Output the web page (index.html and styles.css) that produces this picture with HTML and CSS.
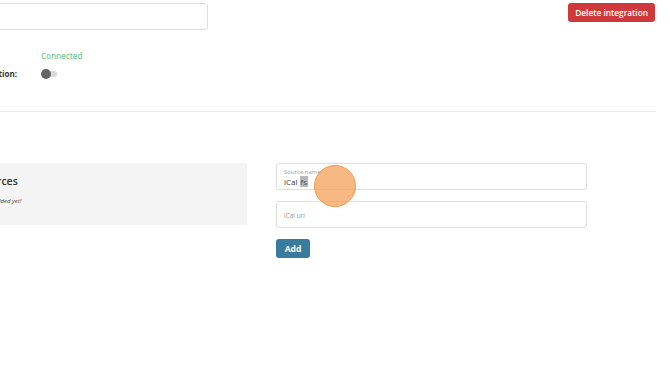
FILE: index.html
```html
<!DOCTYPE html>
<html lang="en">

<head>
    <meta charset="UTF-8">
    <meta name="viewport" content="width=device-width, initial-scale=1.0">
    <title>Integration settings</title>
    <link rel="stylesheet" href="styles.css">
</head>

<body>

    <div class="page">
        <div class="top">
            <div class="field field-top"></div>
            <button class="btn btn-danger">Delete integration</button>
        </div>

        <div class="info">
            <div class="labels">
                <div class="labels-inner">
                    <span class="info-label">Status:</span>
                    <span class="info-label">Sync reservation:</span>
                </div>
            </div>
            <div class="values">
                <span class="info-value status">Connected</span>
                <span class="info-value"><span class="toggle"><span class="knob"></span></span></span>
            </div>
        </div>

        <hr class="divider">

        <div class="sources">
            <div class="panel">
                <div class="panel-inner">
                    <h3>Sources</h3>
                    <p class="empty">None added yet!</p>
                </div>
            </div>

            <form class="source-form">
                <div class="field field-filled">
                    <span class="float-label">Source name</span>
                    <span class="value">iCal <span class="selected">fs</span></span>
                </div>
                <div class="field">
                    <span class="placeholder">iCal url</span>
                </div>
                <div class="actions">
                    <button type="button" class="btn btn-primary">Add</button>
                </div>
            </form>
        </div>
    </div>

    <!-- click marker -->
    <div class="click-dot"></div>

</body>

</html>
```

FILE: styles.css
```css
body {
    margin: 0;
    font-family: "Open Sans", "Noto Sans", sans-serif;
    color: #333;
    background: #fff;
    overflow: hidden;
}

.page {
    width: 856px;
    margin-left: -200px;
    padding-top: 3px;
}

.top {
    display: flex;
    justify-content: space-between;
    align-items: flex-start;
}

.field {
    box-sizing: border-box;
    height: 27px;
    border: 1px solid #dedede;
    border-radius: 3px;
    background: #fff;
    padding: 0 7px;
    display: flex;
    flex-direction: column;
    justify-content: center;
}

.field-top {
    width: 408px;
}

.btn {
    border: none;
    border-radius: 3px;
    color: #fff;
    font-family: inherit;
    cursor: pointer;
}

.btn-danger {
    height: 19px;
    padding: 0 7px;
    margin-right: 1px;
    background: #d0393b;
    font-size: 8.3px;
    font-weight: 600;
}

.info {
    margin-top: 20px;
    display: flex;
}

.labels {
    width: 217px;
    display: flex;
    justify-content: flex-end;
}

.labels-inner,
.values {
    display: flex;
    flex-direction: column;
    gap: 7px;
}

.values {
    margin-left: 24px;
}

.info-label,
.info-value {
    height: 11px;
    display: flex;
    align-items: center;
}

.info-label {
    font-size: 8px;
    font-weight: 700;
    color: #333;
}

.status {
    font-size: 8px;
    font-weight: 600;
    color: #79c996;
}

.toggle {
    position: relative;
    width: 14px;
    height: 6px;
    margin-left: 2px;
    border-radius: 3px;
    background: #d9d9d9;
}

.knob {
    position: absolute;
    left: -2px;
    top: -2px;
    width: 10px;
    height: 10px;
    border-radius: 50%;
    background: #646464;
}

.divider {
    border: none;
    border-top: 1px solid #ececec;
    margin: 32px 0 51px;
}

.sources {
    display: grid;
    grid-template-columns: 447px 311px;
    gap: 29px;
    align-items: start;
}

.panel {
    height: 62px;
    box-sizing: border-box;
    background: #f4f4f4;
    padding-top: 11px;
    display: flex;
}

.panel-inner {
    margin-left: 178px;
}

.panel h3 {
    margin: 0;
    font-size: 10.5px;
    font-weight: 600;
    color: #333;
}

.empty {
    margin: 9px 0 0;
    font-size: 6px;
    font-style: italic;
    color: #444;
}

.source-form {
    display: flex;
    flex-direction: column;
    gap: 11px;
}

.field-filled {
    gap: 3px;
    padding-top: 2px;
}

.float-label {
    font-size: 6px;
    color: #999;
    line-height: 1;
}

.value {
    font-size: 8px;
    color: #333;
    line-height: 1.1;
}

.selected {
    background: #b9b9b9;
    color: #555;
    padding: 0 1px;
}

.placeholder {
    font-size: 6.5px;
    color: #999;
    padding-top: 1px;
}

.actions {
    display: flex;
}

.btn-primary {
    height: 19px;
    width: 34px;
    background: #397b9c;
    font-size: 8.5px;
    font-weight: 700;
}

.click-dot {
    position: absolute;
    left: 314px;
    top: 165px;
    width: 40px;
    height: 40px;
    border-radius: 50%;
    background: rgba(246, 160, 90, 0.75);
    border: 1.5px solid #ef9a4e;
}
```
